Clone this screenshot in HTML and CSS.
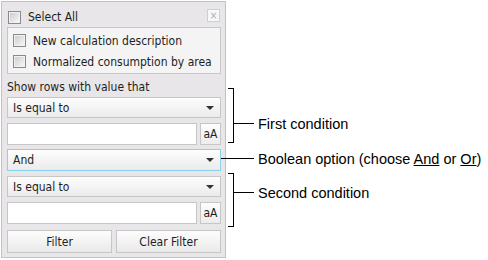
FILE: index.html
```html
<!DOCTYPE html>
<html lang="en">
<head>
    <meta charset="UTF-8">
    <title>Filter</title>
    <link rel="stylesheet" href="styles.css">
</head>
<body>
    <div class="page">
        <div class="panel">
            <div class="headRow">
                <span class="check"></span>
                <span class="label">Select All</span>
                <span class="close">&#215;</span>
            </div>
            <div class="list">
                <div class="item"><span class="check"></span><span class="label">New calculation description</span></div>
                <div class="item"><span class="check"></span><span class="label">Normalized consumption by area</span></div>
            </div>
            <div class="caption">Show rows with value that</div>
            <div class="select first"><span>Is equal to</span><span class="arrow"></span></div>
            <div class="valueRow">
                <div class="input"></div>
                <div class="case">aA</div>
            </div>
            <div class="select active"><span>And</span><span class="arrow"></span></div>
            <div class="select"><span>Is equal to</span><span class="arrow"></span></div>
            <div class="valueRow">
                <div class="input"></div>
                <div class="case">aA</div>
            </div>
            <div class="buttons">
                <button>Filter</button>
                <button>Clear Filter</button>
            </div>
        </div>

        <div class="notes">
            <div class="note first">
                <div class="bracket"></div>
                <div class="arm">
                    <div class="stub"></div>
                    <span>First condition</span>
                </div>
            </div>
            <div class="arm bool">
                <div class="line"></div>
                <span>Boolean option (choose <u>And</u> or <u>Or</u>)</span>
            </div>
            <div class="note second">
                <div class="bracket"></div>
                <div class="arm">
                    <div class="stub"></div>
                    <span>Second condition</span>
                </div>
            </div>
        </div>
    </div>
</body>
</html>
```

FILE: styles.css
```css
body {
    margin: 0;
    background-color: white;
}

.page {
    display: flex;
    width: 488px;
    height: 260px;
}

.panel {
    width: 225px;
    height: 257px;
    margin: 1px 0 0 1px;
    border: 1px solid #c3c1c3;
    background-color: #e8e6e8;
    font-family: "DejaVu Sans Condensed", "DejaVu Sans", sans-serif;
    font-stretch: condensed;
    font-size: 12px;
    color: #1e1e1e;
    padding: 0 4px 0 5px;
    box-sizing: border-box;
    display: flex;
    flex-direction: column;
}

.check {
    display: inline-block;
    width: 13px;
    height: 13px;
    box-sizing: border-box;
    border: 1px solid #8a8a8a;
    box-shadow: inset 0 0 0 1px #f2f2f2;
    background: linear-gradient(135deg, #c9c9c9, #fafafa);
    flex: none;
}

.headRow {
    display: flex;
    align-items: flex-start;
    height: 25px;
    padding: 8px 0 0 1px;
    box-sizing: border-box;
}

.headRow .check {
    margin-top: 1px;
}

.headRow .label {
    margin-left: 7px;
    flex: 1;
    line-height: 15px;
}

.close {
    width: 13px;
    height: 13px;
    box-sizing: border-box;
    border: 1px solid #cfcfcf;
    background-color: #f7f7f7;
    color: #9fb0c0;
    font-family: "DejaVu Sans", sans-serif;
    font-size: 10px;
    line-height: 11px;
    text-align: center;
    margin-top: -1px;
    margin-right: 1px;
}

.list {
    border: 1px solid #c8c6c8;
    background-color: #f4f4f4;
    height: 47px;
    box-sizing: border-box;
    padding: 6px 0 0 5px;
    display: flex;
    flex-direction: column;
    gap: 8px;
}

.item {
    display: flex;
    align-items: center;
    height: 13px;
}

.item .label {
    margin-left: 7px;
}

.caption {
    margin-top: 5px;
    height: 17px;
    line-height: 17px;
}

.select {
    height: 21px;
    border: 1px solid #c6c6c6;
    background: linear-gradient(#fdfdfd, #ebebeb);
    display: flex;
    align-items: center;
    justify-content: space-between;
    padding: 0 6px 0 5px;
    box-sizing: border-box;
    margin-top: 5px;
    flex: none;
}

.select.first {
    margin-top: 1px;
}

.select.active {
    height: 22px;
    border-color: #86d2ef;
    margin-top: 4px;
}

.arrow {
    width: 0;
    height: 0;
    border-left: 4px solid transparent;
    border-right: 4px solid transparent;
    border-top: 4px solid #333;
}

.valueRow {
    display: flex;
    gap: 3px;
    margin-top: 5px;
    height: 22px;
    flex: none;
}

.input {
    flex: 1;
    border: 1px solid #c6c6c6;
    background-color: white;
}

.case {
    width: 21px;
    border: 1px solid #c6c6c6;
    background: linear-gradient(#fdfdfd, #ececec);
    text-align: center;
    line-height: 20px;
    box-sizing: border-box;
}

.buttons {
    display: flex;
    gap: 4px;
    margin-top: 6px;
    height: 23px;
    flex: none;
}

button {
    flex: 1;
    border: 1px solid #c6c6c6;
    background: linear-gradient(#fdfdfd, #e9e9e9);
    font-family: "DejaVu Sans Condensed", "DejaVu Sans", sans-serif;
    font-stretch: condensed;
    font-size: 12px;
    color: #1e1e1e;
    padding: 0;
}

.notes {
    font-family: "Liberation Sans", Arial, sans-serif;
    font-size: 14.5px;
    color: black;
    padding-top: 88px;
    margin-left: 2px;
}

.note {
    display: flex;
    align-items: flex-start;
}

.note.first {
    height: 55px;
}

.note.second {
    height: 54px;
    margin-top: 6px;
}

.bracket {
    width: 6px;
    height: 100%;
    box-sizing: border-box;
    border: 1px solid black;
    border-left: none;
    flex: none;
}

.arm {
    display: flex;
    align-items: center;
    height: 17px;
    white-space: nowrap;
}

.first .arm {
    margin-top: 27px;
}

.second .arm {
    margin-top: 11px;
}

.stub {
    width: 20px;
    height: 1px;
    background-color: black;
}

.arm span {
    margin-left: 4px;
}

.bool {
    margin-top: 7px;
}

.bool .line {
    width: 33px;
    height: 1px;
    margin-left: -7px;
    background-color: black;
}
```
